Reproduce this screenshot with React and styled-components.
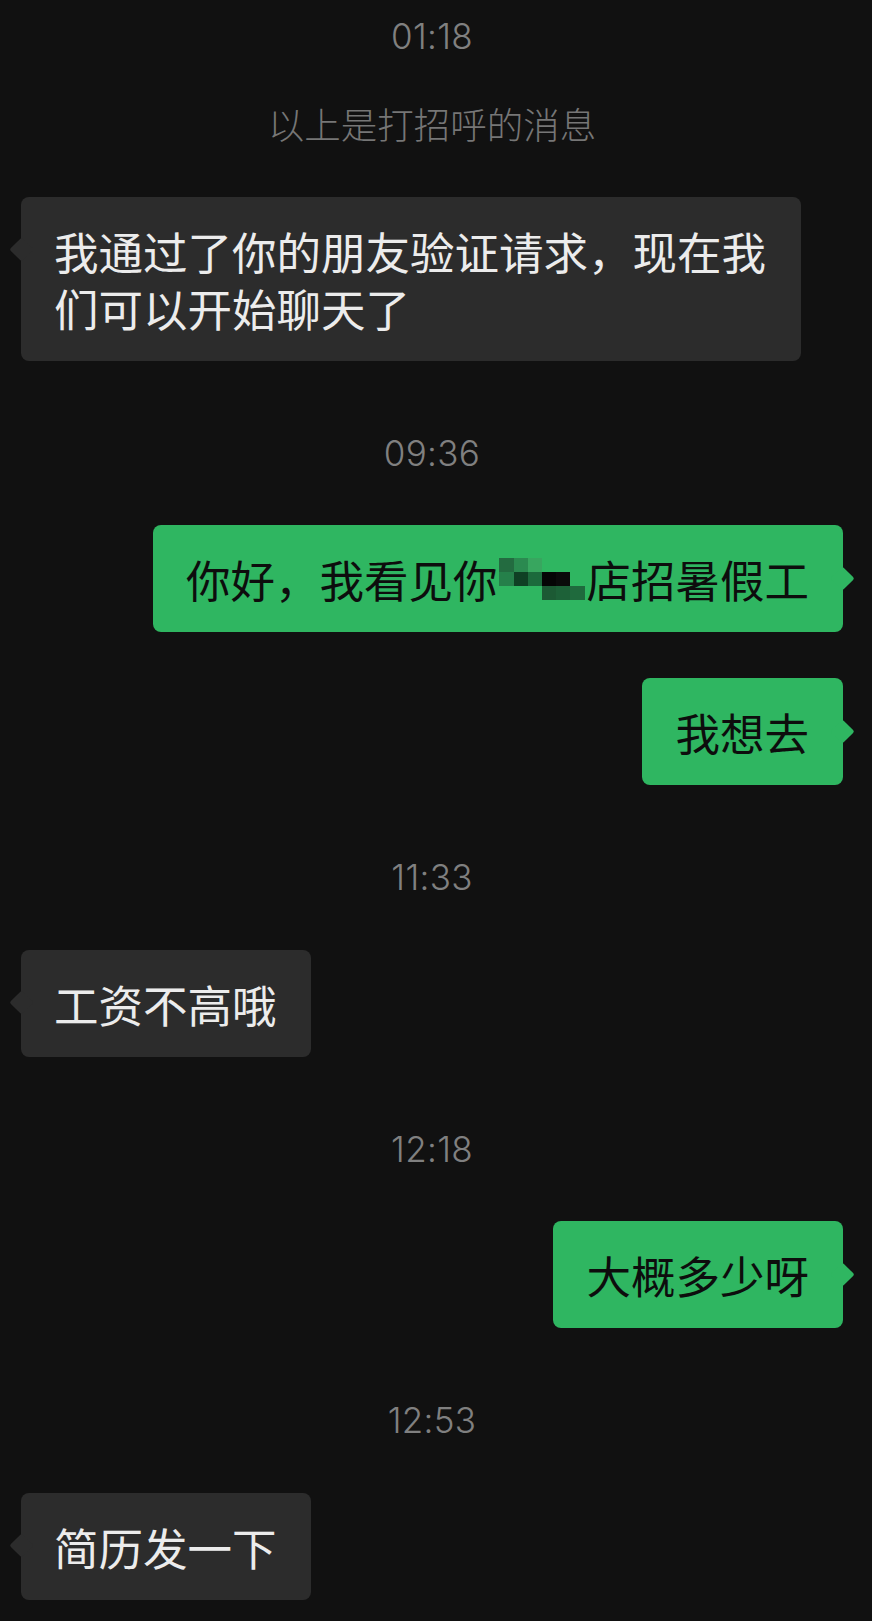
import React from 'react'
import styled, { createGlobalStyle } from 'styled-components'

const GlobalStyle = createGlobalStyle`
  html, body {
    margin: 0;
    padding: 0;
    background: #111111;
  }
  * {
    box-sizing: border-box;
  }
`;

const CJK = `"Noto Sans CJK SC", "Noto Sans", sans-serif`;

const Page = styled.div`
  min-height: 1621px;
  padding: 16px 29px 21px 21px;
  background: #111111;
  display: flex;
  flex-direction: column;
`;

const Section = styled.section`
  display: flex;
  flex-direction: column;
  & + & {
    margin-top: 72px;
  }
`;

const Time = styled.div`
  height: 40px;
  line-height: 40px;
  text-align: center;
  font-family: Inter, Roboto, sans-serif;
  font-weight: 300;
  font-size: 35px;
  letter-spacing: 0.3px;
  color: #808080;
  margin-bottom: ${props => props.$tight ? '43px' : '52.5px'};
`;

const Notice = styled.div`
  height: 50px;
  line-height: 50px;
  text-align: center;
  font-family: ${CJK};
  font-size: 36.5px;
  font-weight: 300;
  color: #767676;
  margin-bottom: 47.5px;
`;

const Messages = styled.div`
  display: flex;
  flex-direction: column;
  gap: 46px;
`;

const Row = styled.div`
  display: flex;
  justify-content: ${props => props.$side === 'right' ? 'flex-end' : 'flex-start'};
`;

const Bubble = styled.div`
  position: relative;
  max-width: 780px;
  padding: 25px 34px 25px 33px;
  border-radius: 8px;
  font-family: ${CJK};
  font-size: 44.5px;
  line-height: 57px;
  background: ${props => props.$side === 'right' ? '#2fb661' : '#2c2c2c'};
  color: ${props => props.$side === 'right' ? '#0d0d0d' : '#ececec'};

  &::before {
    content: "";
    position: absolute;
    top: 44.5px;
    ${props => props.$side === 'right' ? 'right: -8px;' : 'left: -8px;'}
    width: 17px;
    height: 17px;
    border-radius: 2px;
    background: inherit;
    transform: rotate(45deg);
  }
`;

const MosaicSlot = styled.span`
  display: inline-flex;
  align-items: center;
  width: 2em;
  height: 57px;
  vertical-align: top;
  padding-left: 2px;
`;

const MosaicGrid = styled.span`
  display: grid;
  grid-template-columns: repeat(6, 14.2px);
  grid-template-rows: repeat(3, 14px);
`;

const Cell = styled.span`
  background: ${props => props.$c};
`;

const mosaicColors = [
  '#236b40', '#2b8a50', '#38a65f', 'transparent', 'transparent', 'transparent',
  '#25804a', '#0f4024', '#1c6a3c', '#050505', '#0a0a0a', 'transparent',
  'transparent', 'transparent', 'transparent', '#1c5a34', '#1d6138', '#1f6a3d',
];

const Mosaic = () => (
  <MosaicSlot>
    <MosaicGrid>
      {mosaicColors.map((c, i) => <Cell key={i} $c={c} />)}
    </MosaicGrid>
  </MosaicSlot>
);

const chat = [
  {
    time: '01:18',
    notice: '以上是打招呼的消息',
    messages: [
      { side: 'left', text: ['我通过了你的朋友验证请求，现在我们可以开始聊天了'] },
    ],
  },
  {
    time: '09:36',
    messages: [
      { side: 'right', text: ['你好，我看见你', null, '店招暑假工'] },
      { side: 'right', text: ['我想去'] },
    ],
  },
  {
    time: '11:33',
    messages: [{ side: 'left', text: ['工资不高哦'] }],
  },
  {
    time: '12:18',
    messages: [{ side: 'right', text: ['大概多少呀'] }],
  },
  {
    time: '12:53',
    messages: [{ side: 'left', text: ['简历发一下'] }],
  },
];

const App = () => {
  return (
    <>
      <GlobalStyle />
      <Page>
        {chat.map((section) => (
          <Section key={section.time}>
            <Time $tight={!!section.notice}>{section.time}</Time>
            {section.notice && <Notice>{section.notice}</Notice>}
            <Messages>
              {section.messages.map((msg, i) => (
                <Row key={i} $side={msg.side}>
                  <Bubble $side={msg.side}>
                    {msg.text.map((part, j) =>
                      part === null ? <Mosaic key={j} /> : <React.Fragment key={j}>{part}</React.Fragment>
                    )}
                  </Bubble>
                </Row>
              ))}
            </Messages>
          </Section>
        ))}
      </Page>
    </>
  )
}

export default App;
